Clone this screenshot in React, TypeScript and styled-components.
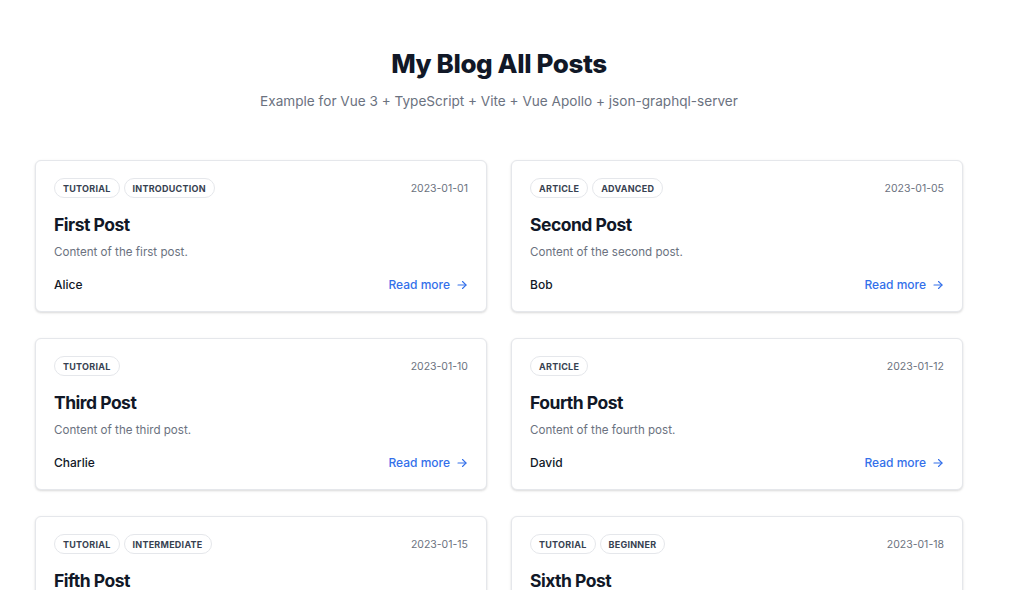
import styled, { createGlobalStyle } from "styled-components";

const posts = [
  { id: 1, title: "First Post", content: "Content of the first post.", author: "Alice", date: "2023-01-01", tags: ["Tutorial", "Introduction"] },
  { id: 2, title: "Second Post", content: "Content of the second post.", author: "Bob", date: "2023-01-05", tags: ["Article", "Advanced"] },
  { id: 3, title: "Third Post", content: "Content of the third post.", author: "Charlie", date: "2023-01-10", tags: ["Tutorial"] },
  { id: 4, title: "Fourth Post", content: "Content of the fourth post.", author: "David", date: "2023-01-12", tags: ["Article"] },
  { id: 5, title: "Fifth Post", content: "Content of the fifth post.", author: "Eve", date: "2023-01-15", tags: ["Tutorial", "Intermediate"] },
  { id: 6, title: "Sixth Post", content: "Content of the sixth post.", author: "Frank", date: "2023-01-18", tags: ["Tutorial", "Beginner"] },
];

export default function App() {
  return (
    <>
      <GlobalStyle />
      <Page>
        <Header>
          <Title>My Blog All Posts</Title>
          <Subtitle>Example for Vue 3 + TypeScript + Vite + Vue Apollo + json-graphql-server</Subtitle>
        </Header>
        <Grid>
          {posts.map((post) => (
            <Card key={post.id}>
              <TopRow>
                <Tags>
                  {post.tags.map((tag) => (
                    <Tag key={tag}>{tag}</Tag>
                  ))}
                </Tags>
                <PostDate>{post.date}</PostDate>
              </TopRow>
              <PostTitle>{post.title}</PostTitle>
              <Content>{post.content}</Content>
              <Footer>
                <Author>{post.author}</Author>
                <ReadMore href="#">
                  Read more
                  <svg width="12" height="12" viewBox="0 0 24 24" fill="none" stroke="currentColor" strokeWidth="2.2" strokeLinecap="round" strokeLinejoin="round">
                    <path d="M4 12h16" />
                    <path d="M13 5l7 7-7 7" />
                  </svg>
                </ReadMore>
              </Footer>
            </Card>
          ))}
        </Grid>
      </Page>
    </>
  );
}

const GlobalStyle = createGlobalStyle`
  body {
    margin: 0;
    background: #ffffff;
    font-family: Inter, "Noto Sans", sans-serif;
    -webkit-font-smoothing: antialiased;
  }
`;

const Page = styled.div`
  width: 928px;
  padding: 48px 0 0 35px;
`;

const Header = styled.header`
  text-align: center;
  margin-bottom: 50px;
`;

const Title = styled.h1`
  font-size: 26px;
  font-weight: 800;
  color: #111827;
  margin: 0 0 12px;
  letter-spacing: -0.4px;
  line-height: 32px;
`;

const Subtitle = styled.p`
  font-size: 13.6px;
  color: #6b7280;
  margin: 0;
  line-height: 18px;
`;

const Grid = styled.div`
  display: grid;
  grid-template-columns: repeat(2, 1fr);
  gap: 26px 24px;
`;

const Card = styled.article`
  border: 1px solid #e5e7eb;
  border-radius: 6px;
  box-shadow: 0 1px 3px rgba(0, 0, 0, 0.1), 0 1px 2px rgba(0, 0, 0, 0.06);
  padding: 17px 18px 18px;
  background: #fff;
`;

const TopRow = styled.div`
  display: flex;
  justify-content: space-between;
  align-items: center;
`;

const Tags = styled.div`
  display: flex;
  gap: 4px;
`;

const Tag = styled.span`
  display: inline-flex;
  align-items: center;
  box-sizing: border-box;
  height: 20px;
  padding: 0 8px;
  border: 1px solid #e5e7eb;
  border-radius: 999px;
  font-size: 9px;
  font-weight: 700;
  letter-spacing: 0.25px;
  text-transform: uppercase;
  color: #374151;
`;

const PostDate = styled.span`
  font-size: 10.5px;
  color: #6b7280;
`;

const PostTitle = styled.h2`
  font-size: 17.5px;
  font-weight: 700;
  color: #111827;
  margin: 15px 0 6px;
  line-height: 24px;
  letter-spacing: -0.5px;
`;

const Content = styled.p`
  font-size: 11.6px;
  color: #6b7280;
  margin: 0 0 16px;
  line-height: 18px;
`;

const Footer = styled.div`
  display: flex;
  justify-content: space-between;
  align-items: center;
  line-height: 16px;
`;

const Author = styled.span`
  font-size: 12px;
  font-weight: 500;
  color: #111827;
`;

const ReadMore = styled.a`
  display: inline-flex;
  align-items: center;
  gap: 6px;
  font-size: 12px;
  font-weight: 500;
  color: #3470ea;
  text-decoration: none;
`;
